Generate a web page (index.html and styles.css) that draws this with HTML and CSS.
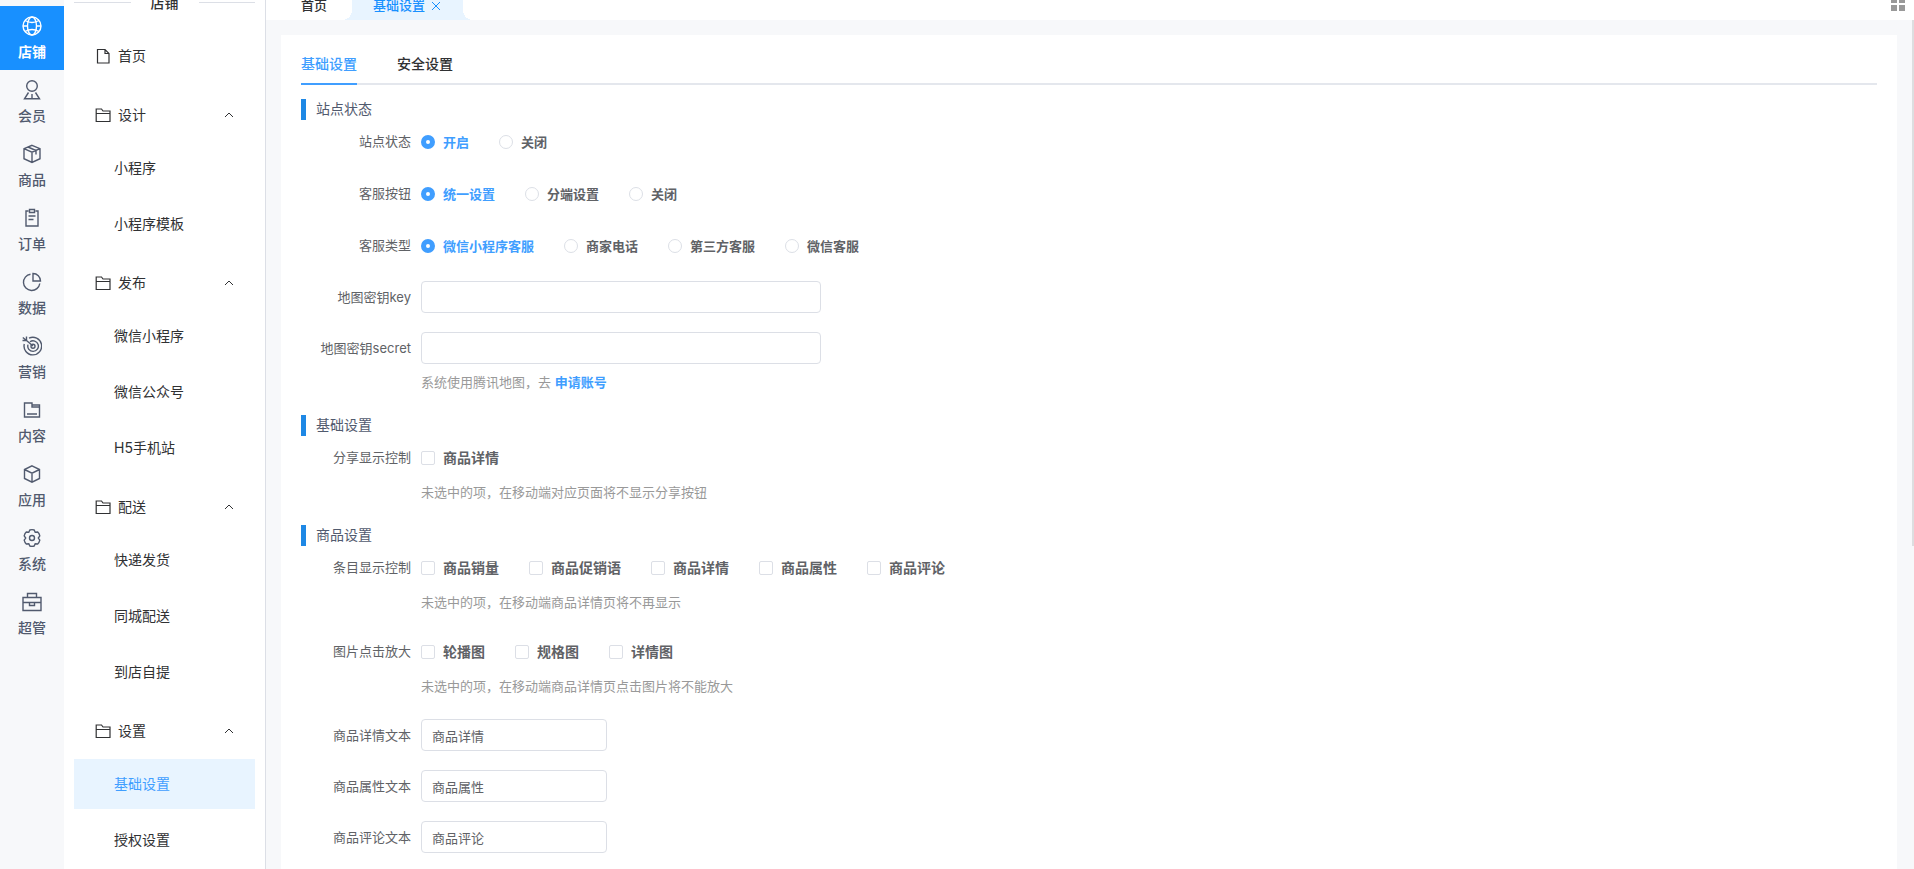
FILE: index.html
```html
<!DOCTYPE html>
<html lang="zh-CN">
<head>
    <meta charset="UTF-8">
    <meta name="viewport" content="width=device-width, initial-scale=1">
    <title>基础设置</title>
    <link rel="stylesheet" href="styles.css">
</head>
<body>
    <div class="layout">
        <nav class="rail">
            <a class="rail-item active" href="#">
                <svg viewBox="0 0 20 20"><circle cx="10" cy="10" r="9"/><ellipse cx="10" cy="10" rx="4.500" ry="9"/><path d="M3 4.500Q10 8.500 17 4.500M3 15.500Q10 11.500 17 15.500M1 10h4.500M14.500 10H19"/></svg>
                <span>店铺</span>
            </a>
            <a class="rail-item" href="#">
                <svg viewBox="0 0 20 20"><circle cx="10" cy="6" r="5.300"/><path d="M6.500 12.500 2.500 18.800h15l-4-6.300M10 14v4.500"/></svg>
                <span>会员</span>
            </a>
            <a class="rail-item" href="#">
                <svg viewBox="0 0 20 20"><path d="M10 1.300 18 4.700v10L10 18.500 2 14.700v-10zM2 4.700l8 3.500 8-3.500M10 8.200v10.300M6 3l8 3.500v4"/></svg>
                <span>商品</span>
            </a>
            <a class="rail-item" href="#">
                <svg viewBox="0 0 20 20"><path d="M6.500 3H4v15h12V3h-2.500M7.500 1.500h5v3h-5zM6.500 8h7M6.500 11.500h5"/></svg>
                <span>订单</span>
            </a>
            <a class="rail-item" href="#">
                <svg viewBox="0 0 20 20"><path d="M8.500 2.200A8.200 8.200 0 1 0 17.800 11.500M11 1.500v7.500h7.500A7.500 7.500 0 0 0 11 1.500z"/></svg>
                <span>数据</span>
            </a>
            <a class="rail-item" href="#">
                <svg viewBox="0 0 20 20"><path d="M7 2.200A8.800 8.800 0 1 1 2.300 8M8 5.800a5.300 5.300 0 1 1-2 2.800M4.500 4.500 11 10M.5 4.500h4V.5M.8 1.500l3.700 3"/><circle cx="11" cy="10.300" r="2"/></svg>
                <span>营销</span>
            </a>
            <a class="rail-item" href="#">
                <svg viewBox="0 0 20 20"><path d="M2.500 3v14h15V5H10V3zM10 5v2h7.500M5 14h10"/></svg>
                <span>内容</span>
            </a>
            <a class="rail-item" href="#">
                <svg viewBox="0 0 20 20"><path d="M10 1.800 17.500 5.500v9L10 18.200 2.500 14.500v-9zM2.500 5.500 10 9.200l7.500-3.700M10 9.200v9"/></svg>
                <span>应用</span>
            </a>
            <a class="rail-item" href="#">
                <svg viewBox="0 0 20 20"><path d="M7.800 2Q10 1.300 12.200 2L13.200 4.300 15.700 4Q17.300 5.500 17.800 7.800L16.300 10l1.500 2.200Q17.300 14.500 15.700 16L13.200 15.700 12.200 18Q10 18.700 7.800 18L6.800 15.700 4.300 16Q2.700 14.500 2.200 12.200L3.700 10 2.200 7.800Q2.700 5.500 4.300 4L6.800 4.300z"/><circle cx="10" cy="10" r="2.500"/></svg>
                <span>系统</span>
            </a>
            <a class="rail-item" href="#">
                <svg viewBox="0 0 20 20"><path d="M1 5.500h18V18.500H1zM5.500 5.500V1.500h9v4M1 10.500h18M7.500 10.500v3h5v-3"/></svg>
                <span>超管</span>
            </a>
        </nav>

        <aside class="sidebar">
            <div class="sidebar-title"><span>店铺</span></div>
            <a class="menu-item root" href="#">
                <svg class="menu-icon" viewBox="0 0 16 16"><path d="M2.500 1.500h7.500l4 4v9.500h-11.500zM10 1.500v4h4"/></svg>
                <span>首页</span>
            </a>
            <button class="menu-group" type="button">
                <svg class="menu-icon" viewBox="0 0 16 16"><path d="M1.200 2h5.300l1.500 2h7v10.500H1.200zM1.200 6.500H15"/></svg>
                <span>设计</span>
                <svg class="arrow" viewBox="0 0 10 6"><path d="M1 5l4-4 4 4"/></svg>
            </button>
            <a class="menu-item" href="#">小程序</a>
            <a class="menu-item" href="#">小程序模板</a>
            <button class="menu-group" type="button">
                <svg class="menu-icon" viewBox="0 0 16 16"><path d="M1.200 2h5.300l1.500 2h7v10.500H1.200zM1.200 6.500H15"/></svg>
                <span>发布</span>
                <svg class="arrow" viewBox="0 0 10 6"><path d="M1 5l4-4 4 4"/></svg>
            </button>
            <a class="menu-item" href="#">微信小程序</a>
            <a class="menu-item" href="#">微信公众号</a>
            <a class="menu-item" href="#">H5手机站</a>
            <button class="menu-group" type="button">
                <svg class="menu-icon" viewBox="0 0 16 16"><path d="M1.200 2h5.300l1.500 2h7v10.500H1.200zM1.200 6.500H15"/></svg>
                <span>配送</span>
                <svg class="arrow" viewBox="0 0 10 6"><path d="M1 5l4-4 4 4"/></svg>
            </button>
            <a class="menu-item" href="#">快递发货</a>
            <a class="menu-item" href="#">同城配送</a>
            <a class="menu-item" href="#">到店自提</a>
            <button class="menu-group" type="button">
                <svg class="menu-icon" viewBox="0 0 16 16"><path d="M1.200 2h5.300l1.500 2h7v10.500H1.200zM1.200 6.500H15"/></svg>
                <span>设置</span>
                <svg class="arrow" viewBox="0 0 10 6"><path d="M1 5l4-4 4 4"/></svg>
            </button>
            <a class="menu-item active" href="#">基础设置</a>
            <a class="menu-item" href="#">授权设置</a>
        </aside>

        <div class="main">
            <header class="page-tabs">
                <a class="page-tab" href="#">首页</a>
                <a class="page-tab active" href="#">
                    <span>基础设置</span>
                    <svg class="close" viewBox="0 0 8 10"><path d="M0 2l8 8M8 2L0 10"/></svg>
                </a>
                <button class="grid-button" type="button" aria-label="更多">
                    <svg viewBox="0 0 14 14"><path d="M0 0h6v6H0zM8 0h6v6H8zM0 8h6v6H0zM8 8h6v6H8z"/></svg>
                </button>
            </header>

            <main class="content">
                <form class="card">
                    <div class="tabs">
                        <button class="tab active" type="button">基础设置</button>
                        <button class="tab" type="button">安全设置</button>
                    </div>

                    <h2 class="section-title">站点状态</h2>
                    <div class="form-item" role="radiogroup" aria-labelledby="siteStatus">
                        <span class="label" id="siteStatus">站点状态</span>
                        <div class="options">
                            <label class="option"><input type="radio" name="status" checked><span>开启</span></label>
                            <label class="option"><input type="radio" name="status"><span>关闭</span></label>
                        </div>
                    </div>
                    <div class="form-item" role="radiogroup" aria-labelledby="serviceButton">
                        <span class="label" id="serviceButton">客服按钮</span>
                        <div class="options">
                            <label class="option"><input type="radio" name="service" checked><span>统一设置</span></label>
                            <label class="option"><input type="radio" name="service"><span>分端设置</span></label>
                            <label class="option"><input type="radio" name="service"><span>关闭</span></label>
                        </div>
                    </div>
                    <div class="form-item" role="radiogroup" aria-labelledby="serviceType">
                        <span class="label" id="serviceType">客服类型</span>
                        <div class="options">
                            <label class="option"><input type="radio" name="type" checked><span>微信小程序客服</span></label>
                            <label class="option"><input type="radio" name="type"><span>商家电话</span></label>
                            <label class="option"><input type="radio" name="type"><span>第三方客服</span></label>
                            <label class="option"><input type="radio" name="type"><span>微信客服</span></label>
                        </div>
                    </div>
                    <div class="form-item">
                        <label class="label" for="mapKey">地图密钥key</label>
                        <input class="input wide" id="mapKey" type="text">
                    </div>
                    <div class="form-item has-hint">
                        <label class="label" for="mapSecret">地图密钥secret</label>
                        <div class="field">
                            <input class="input wide" id="mapSecret" type="text">
                            <p class="hint">系统使用腾讯地图，去 <a href="#">申请账号</a></p>
                        </div>
                    </div>

                    <h2 class="section-title">基础设置</h2>
                    <div class="form-item has-hint" role="group" aria-labelledby="shareControl">
                        <span class="label" id="shareControl">分享显示控制</span>
                        <div class="field">
                            <div class="options checks">
                                <label class="option"><input type="checkbox"><span>商品详情</span></label>
                            </div>
                            <p class="hint">未选中的项，在移动端对应页面将不显示分享按钮</p>
                        </div>
                    </div>

                    <h2 class="section-title">商品设置</h2>
                    <div class="form-item has-hint" role="group" aria-labelledby="itemControl">
                        <span class="label" id="itemControl">条目显示控制</span>
                        <div class="field">
                            <div class="options checks">
                                <label class="option"><input type="checkbox"><span>商品销量</span></label>
                                <label class="option"><input type="checkbox"><span>商品促销语</span></label>
                                <label class="option"><input type="checkbox"><span>商品详情</span></label>
                                <label class="option"><input type="checkbox"><span>商品属性</span></label>
                                <label class="option"><input type="checkbox"><span>商品评论</span></label>
                            </div>
                            <p class="hint">未选中的项，在移动端商品详情页将不再显示</p>
                        </div>
                    </div>
                    <div class="form-item has-hint" role="group" aria-labelledby="imageZoom">
                        <span class="label" id="imageZoom">图片点击放大</span>
                        <div class="field">
                            <div class="options checks">
                                <label class="option"><input type="checkbox"><span>轮播图</span></label>
                                <label class="option"><input type="checkbox"><span>规格图</span></label>
                                <label class="option"><input type="checkbox"><span>详情图</span></label>
                            </div>
                            <p class="hint">未选中的项，在移动端商品详情页点击图片将不能放大</p>
                        </div>
                    </div>
                    <div class="form-item">
                        <label class="label" for="detailText">商品详情文本</label>
                        <input class="input" id="detailText" type="text" value="商品详情">
                    </div>
                    <div class="form-item">
                        <label class="label" for="attrText">商品属性文本</label>
                        <input class="input" id="attrText" type="text" value="商品属性">
                    </div>
                    <div class="form-item">
                        <label class="label" for="commentText">商品评论文本</label>
                        <input class="input" id="commentText" type="text" value="商品评论">
                    </div>
                </form>
                <div class="scroll-thumb"></div>
            </main>
        </div>
    </div>
</body>
</html>
```
FILE: styles.css
```css
* {
    box-sizing: border-box;
}

body {
    margin: 0;
    font-family: Inter, "Noto Sans CJK SC", sans-serif;
    font-size: 14px;
    line-height: 20px;
    color: #303133;
    overflow: hidden;
}

a {
    color: inherit;
    text-decoration: none;
}

button {
    font: inherit;
    color: inherit;
    background: none;
    border: 0;
    padding: 0;
    cursor: pointer;
}

svg {
    fill: none;
    stroke: currentColor;
    flex-shrink: 0;
}

.layout {
    display: flex;
    height: 100vh;
    overflow: hidden;
}

/* left icon rail */
.rail {
    width: 64px;
    flex-shrink: 0;
    padding-top: 6px;
    background: #f7f8fa;
    color: #515a6e;
}

.rail-item {
    display: flex;
    flex-direction: column;
    align-items: center;
    height: 64px;
    padding-top: 10px;
    gap: 6px;
    font-weight: 500;
}

.rail-item svg {
    width: 20px;
    height: 20px;
    stroke-width: 1.4;
}

.rail-item.active {
    background: #1890ff;
    color: #fff;
    font-weight: 700;
}

/* second level menu */
.sidebar {
    width: 202px;
    flex-shrink: 0;
    padding: 0 10px;
    border-right: 1px solid #dcdfe6;
    background: #fff;
    overflow: hidden;
}

.sidebar-title {
    display: flex;
    align-items: center;
    gap: 20px;
    height: 57px;
    margin-top: -26px;
    font-weight: 500;
}

.sidebar-title::before,
.sidebar-title::after {
    content: "";
    flex: 1;
    height: 1px;
    background: #dcdfe6;
}

.menu-item {
    display: flex;
    align-items: center;
    height: 50px;
    margin-bottom: 6px;
    padding-left: 40px;
}

.menu-item.root {
    padding-left: 21px;
}

.menu-item.active {
    background: #e8f4ff;
    color: #409eff;
}

.menu-group {
    display: flex;
    align-items: center;
    width: 100%;
    height: 56px;
    padding: 0 21px;
}

.menu-icon {
    width: 16px;
    height: 16px;
    margin-right: 7px;
    stroke-width: 1.2;
}

.arrow {
    width: 10px;
    height: 6px;
    margin-left: auto;
}

/* top page tabs */
.main {
    display: flex;
    flex-direction: column;
    flex: 1;
    min-width: 0;
}

.page-tabs {
    display: flex;
    align-items: flex-end;
    height: 20px;
    padding: 0 9px 0 35px;
    overflow: hidden;
    flex-shrink: 0;
}

.page-tab {
    position: relative;
    display: flex;
    align-items: center;
    height: 30px;
    font-size: 13px;
    font-weight: 500;
}

.page-tab.active {
    margin-left: 25px;
    padding: 0 23px 0 21px;
    gap: 7px;
    background: #e8f4ff;
    color: #1890ff;
}

.page-tab.active::before,
.page-tab.active::after {
    content: "";
    position: absolute;
    bottom: 0;
    width: 10px;
    height: 10px;
}

.page-tab.active::before {
    right: 100%;
    background: radial-gradient(circle at 0 0, transparent 10px, #e8f4ff 10px);
}

.page-tab.active::after {
    left: 100%;
    background: radial-gradient(circle at 100% 0, transparent 10px, #e8f4ff 10px);
}

.close {
    width: 8px;
    height: 10px;
}

.grid-button {
    display: flex;
    height: 23px;
    margin-left: auto;
    color: #999;
}

.grid-button svg {
    width: 14px;
    height: 14px;
    fill: currentColor;
    stroke: none;
}

/* settings card */
.content {
    position: relative;
    flex: 1;
    min-height: 0;
    padding: 15px 17px 0 15px;
    background: #f7f8fa;
    overflow: hidden;
}

.scroll-thumb {
    position: absolute;
    top: 0;
    right: 0;
    width: 2px;
    height: 62%;
    background: #dddee0;
}

.card {
    min-height: 100%;
    padding: 10px 20px;
    background: #fff;
}

.tabs {
    display: flex;
    gap: 40px;
    height: 40px;
    border-bottom: 2px solid #e4e7ed;
}

.tab {
    height: 40px;
    font-weight: 500;
    border-bottom: 2px solid transparent;
}

.tab.active {
    color: #409eff;
    border-color: #409eff;
}

.section-title {
    height: 21px;
    margin: 0 0 5px;
    padding-left: 10px;
    border-left: 5px solid #1e88e5;
    font-size: 14px;
    font-weight: 400;
    color: #515a6e;
}

.tabs + .section-title {
    margin-top: 14px;
}

.form-item {
    display: flex;
    align-items: flex-start;
    margin-bottom: 19px;
    font-size: 13px;
    color: #606266;
}

.form-item.has-hint {
    margin-bottom: 23px;
}

.label {
    width: 120px;
    flex-shrink: 0;
    padding-right: 10px;
    line-height: 32px;
    text-align: right;
}

.options {
    display: flex;
    flex-wrap: wrap;
    gap: 0 30px;
}

.option {
    display: flex;
    align-items: center;
    gap: 8px;
    height: 33px;
    font-weight: 700;
    cursor: pointer;
}

.checks {
    font-size: 14px;
}

.option input {
    appearance: none;
    width: 14px;
    height: 14px;
    margin: 0;
    border: 1px solid #dcdfe6;
    border-radius: 2px;
    background: #fff;
}

.option input[type="radio"] {
    border-radius: 50%;
}

.option input[type="radio"]:checked {
    border: 5px solid #409eff;
}

.option input:checked + span {
    color: #409eff;
}

.input {
    width: 186px;
    height: 32px;
    padding: 0 10px;
    border: 1px solid #dcdfe6;
    border-radius: 4px;
    font: inherit;
    line-height: normal;
    color: #606266;
    background: #fff;
}

.input.wide {
    width: 400px;
}

.field .input {
    display: block;
}

.hint {
    margin: 8px 0 0;
    color: #999;
}

.hint a {
    color: #409eff;
    font-weight: 700;
}
```
